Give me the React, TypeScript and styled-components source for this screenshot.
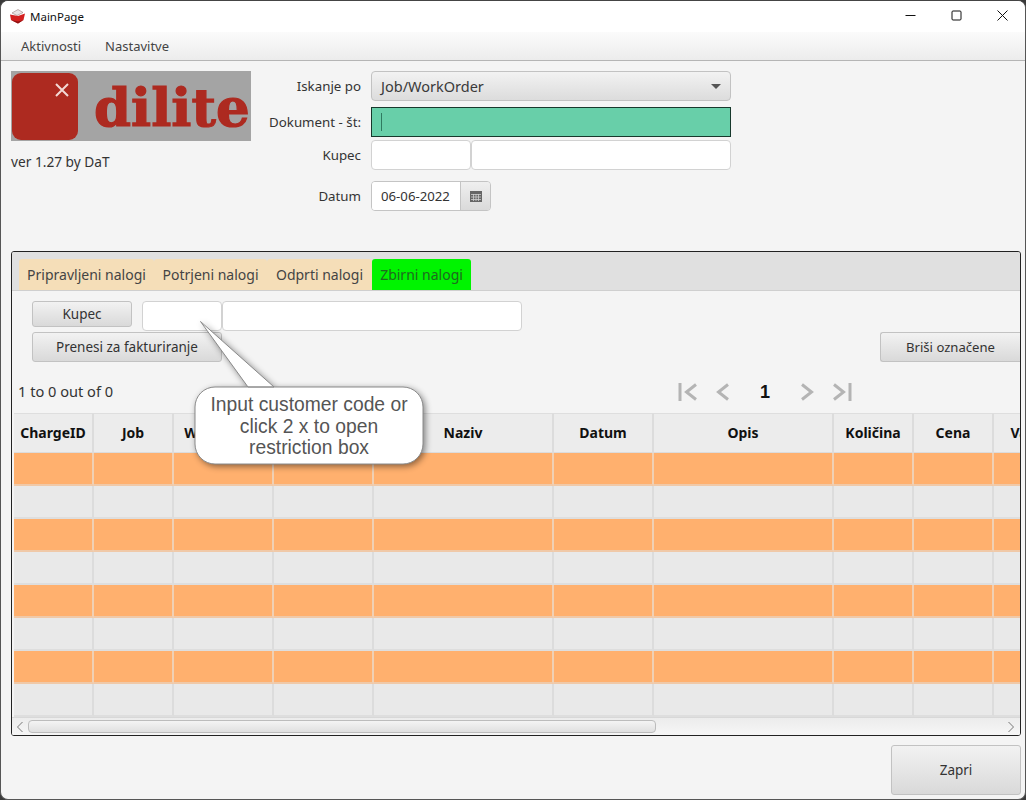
import React from "react";
import styled, { createGlobalStyle } from "styled-components";

const Global = createGlobalStyle`
  html, body { margin: 0; padding: 0; background: #3a3a3a; overflow: hidden; }
  * { box-sizing: border-box; }
`;

const Win = styled.div`
  position: relative;
  width: 1026px;
  height: 800px;
  background: #f4f4f4;
  border-radius: 8px;
  overflow: hidden;
  display: flex;
  flex-direction: column;
  font-family: "Noto Sans", "Open Sans", sans-serif;
  color: #333;
  border-top: 1px solid #444;
  border-left: 1px solid #555;
  border-right: 1px solid #555;
  border-bottom: 1px solid #555;
`;

const TitleBar = styled.div`
  height: 31px;
  background: #fff;
  display: flex;
  align-items: center;
  padding-left: 8px;
  flex: none;
`;
const AppTitle = styled.span`
  margin-left: 4px;
  font-size: 11.5px;
  color: #111;
`;
const WinButtons = styled.div`
  margin-left: auto;
  margin-top: -2px;
  display: flex;
`;
const WinButton = styled.div`
  width: 46px;
  height: 30px;
  display: flex;
  align-items: center;
  justify-content: center;
  svg { display: block; }
`;

const MenuBar = styled.div`
  height: 29px;
  background: linear-gradient(#fbfbfb, #ececec);
  border-bottom: 1px solid #b5b5b5;
  display: flex;
  align-items: center;
  padding-left: 20px;
  gap: 24px;
  flex: none;
`;
const MenuItem = styled.span`
  font-size: 13px;
  color: #444;
`;

const Top = styled.div`
  height: 190px;
  flex: none;
  display: flex;
  padding: 10px 0 0 10px;
`;
const Brand = styled.div`
  width: 240px;
  flex: none;
`;
const Logo = styled.div`
  width: 240px;
  height: 70px;
  background: #a4a4a4;
  display: flex;
  align-items: center;
  padding-left: 1px;
`;
const LogoSquare = styled.div`
  width: 66px;
  height: 67px;
  border-radius: 9px;
  background: #ad2a20;
  flex: none;
  display: flex;
  justify-content: flex-end;
  padding: 10px 9px 0 0;
`;
const LogoText = styled.span`
  font-family: "DejaVu Serif", serif;
  font-weight: 700;
  font-size: 53px;
  color: #ad2a20;
  -webkit-text-stroke: 1.2px #ad2a20;
  margin-left: 16px;
  margin-top: 2px;
  white-space: nowrap;
  line-height: 1;
`;
const Version = styled.div`
  font-size: 13.7px;
  color: #333;
  margin-top: 12px;
  line-height: 17px;
`;

const Form = styled.div`
  margin-left: 10px;
  display: grid;
  grid-template-columns: 100px 360px;
  column-gap: 10px;
  grid-template-rows: 36px 33px 41px 30px;
  align-items: start;
  align-content: start;
`;
const Label = styled.label`
  font-size: 13.3px;
  height: 30px;
  color: #333;
  display: flex;
  align-items: center;
  justify-content: flex-end;
  white-space: nowrap;
`;
const Select = styled.div`
  border: 1px solid #c2c2c2;
  border-radius: 4px;
  background: linear-gradient(#f2f2f2, #dcdcdc);
  display: flex;
  align-items: center;
  justify-content: space-between;
  padding: 0 9px;
  font-size: 14.5px;
  color: #3a3a3a;
  height: 30px;
`;
const Arrow = styled.span`
  width: 0;
  height: 0;
  border-left: 5px solid transparent;
  border-right: 5px solid transparent;
  border-top: 5px solid #555;
`;
const DocInput = styled.div`
  background: #68cfa9;
  border: 1px solid #17382c;
  display: flex;
  align-items: center;
  padding-left: 9px;
  height: 30px;
`;
const Caret = styled.span`
  width: 1px;
  height: 18px;
  background: #2f7a60;
  display: block;
`;
const Pair = styled.div`
  display: flex;
`;
const TextBox = styled.div<{ $w: number }>`
  width: ${(p) => p.$w}px;
  height: 30px;
  background: #fff;
  border: 1px solid #d2d2d2;
  border-radius: 4px;
  flex: none;
`;
const DateField = styled.div`
  width: 120px;
  height: 30px;
  display: flex;
  border: 1px solid #c4c4c4;
  border-radius: 4px;
  overflow: hidden;
`;
const DateText = styled.div`
  width: 89px;
  background: #fff;
  font-size: 13.2px;
  display: flex;
  align-items: center;
  padding-left: 9px;
  color: #333;
  border-right: 1px solid #c4c4c4;
`;
const DateBtn = styled.div`
  flex: 1;
  background: linear-gradient(#efefef, #dadada);
  display: flex;
  align-items: center;
  justify-content: center;
`;

const TabPane = styled.div`
  margin-left: 10px;
  width: 1010px;
  height: 485px;
  flex: none;
  border: 1px solid #222;
  border-radius: 3px;
  overflow: hidden;
  display: flex;
  flex-direction: column;
`;
const TabStrip = styled.div`
  height: 39px;
  flex: none;
  background: #e0e0e0;
  border-bottom: 1px solid #cfcfcf;
  padding: 7px 0 0 7px;
  display: flex;
`;
const Tab = styled.div<{ $active?: boolean; $w: number }>`
  width: ${(p) => p.$w}px;
  height: 31px;
  background: ${(p) => (p.$active ? "#00f400" : "#f5deb8")};
  border-radius: 3px 3px 0 0;
  font-size: 14px;
  color: ${(p) => (p.$active ? "#1f6a1f" : "#444")};
  display: flex;
  align-items: center;
  justify-content: center;
  white-space: nowrap;
`;
const TabBody = styled.div`
  flex: 1;
  min-height: 0;
  display: flex;
  flex-direction: column;
  background: #f4f4f4;
`;
const Tools = styled.div`
  height: 122px;
  flex: none;
  padding: 10px 0 0 20px;
  display: flex;
  flex-direction: column;
`;
const ToolRow = styled.div`
  display: flex;
  align-items: flex-start;
`;
const Btn = styled.div<{ $w: number; $h: number }>`
  width: ${(p) => p.$w}px;
  height: ${(p) => p.$h}px;
  flex: none;
  background: linear-gradient(#f2f2f2, #d9d9d9);
  border: 1px solid #c2c2c2;
  border-radius: 3px;
  display: flex;
  align-items: center;
  justify-content: center;
  font-size: 13.5px;
  color: #333;
`;
const RowGap = styled.div`
  width: 10px;
  flex: none;
`;
const SecondRow = styled(ToolRow)`
  margin-top: 1px;
  justify-content: space-between;
`;
const DeleteBtn = styled(Btn)`
  font-size: 13.1px;
  border-right: none;
  border-radius: 3px 0 0 3px;
`;
const Pager = styled.div`
  margin: 19px 0 0 -14px;
  display: flex;
  align-items: center;
  height: 22px;
`;
const Count = styled.span`
  font-size: 14.6px;
  color: #333;
  width: 660px;
  flex: none;
  padding-bottom: 2px;
`;
const PagerIcon = styled.div<{ $w: number }>`
  width: ${(p) => p.$w}px;
  flex: none;
  display: flex;
  justify-content: center;
  svg { display: block; }
`;
const PageNum = styled.span`
  width: 48px;
  text-align: center;
  font-weight: 700;
  font-size: 18px;
  font-family: "Liberation Sans", sans-serif;
  color: #111;
`;

const Table = styled.div`
  flex: 1;
  min-height: 0;
  overflow: hidden;
  padding-left: 2px;
`;
const GridRow = styled.div<{ $h: number }>`
  display: grid;
  grid-template-columns: 80px 80px 100px 100px 180px 100px 180px 80px 80px 80px;
  width: 1060px;
  height: ${(p) => p.$h}px;
`;
const HeadCell = styled.div`
  background: #ececec;
  border-right: 2px solid #dcdcdc;
  border-top: 1px solid #dedede;
  border-bottom: 1px solid #dcdcdc;
  padding-bottom: 2px;
  font-weight: 700;
  font-size: 14px;
  color: #111;
  display: flex;
  align-items: center;
  justify-content: center;
  white-space: nowrap;
`;
const Cell = styled.div<{ $orange: boolean }>`
  background: ${(p) => (p.$orange ? "#ffb06e" : "#e9e9e9")};
  border-right: 2px solid ${(p) => (p.$orange ? "#f0d0b4" : "#dcdcdc")};
  border-bottom: 2px solid ${(p) => (p.$orange ? "#f0c9a8" : "#dedede")};
`;

const ScrollBar = styled.div`
  height: 18px;
  flex: none;
  background: linear-gradient(#ececec, #f6f6f6);
  border-top: 1px solid #d8d8d8;
  display: flex;
  align-items: center;
  padding: 0 5px 0 4px;
`;
const Thumb = styled.div`
  width: 628px;
  height: 13px;
  margin-left: 4px;
  border: 1px solid #bcbcbc;
  border-radius: 4px;
  background: linear-gradient(#f4f4f4, #e0e0e0);
`;
const ScrollEnd = styled.div`
  margin-left: auto;
  display: flex;
`;

const Footer = styled.div`
  flex: 1;
  display: flex;
  justify-content: flex-end;
  align-items: flex-start;
  padding: 9px 4px 0 0;
`;
const CloseBtn = styled(Btn)`
  font-size: 13.5px;
`;

const Callout = styled.div`
  position: absolute;
  left: 194px;
  top: 320px;
  width: 228px;
  height: 143px;
  svg {
    position: absolute;
    left: 0;
    top: 0;
    overflow: visible;
    filter: drop-shadow(2px 2px 3px rgba(0, 0, 0, 0.45));
  }
`;
const CalloutText = styled.div`
  position: absolute;
  left: 0;
  right: 0;
  top: 73px;
  text-align: center;
  font-family: "Liberation Sans", Arial, sans-serif;
  font-size: 19.3px;
  line-height: 21.5px;
  color: #555;
  white-space: nowrap;
`;

const cols = ["ChargeID", "Job", "WorkOrder", "Kupec", "Naziv", "Datum", "Opis", "Količina", "Cena", "Valuta"];
const rows = [0, 1, 2, 3, 4, 5, 6, 7];

const Chevron = ({ dir, bar }: { dir: "l" | "r"; bar?: boolean }) => (
  <svg width="22" height="20" viewBox="0 0 22 20" fill="none" stroke="#b4b4b4" strokeWidth="3">
    {dir === "l" ? (
      <>
        {bar && <path d="M2 1v18" />}
        <path d="M18 2.5L8.5 10l9.5 7.5" />
      </>
    ) : (
      <>
        <path d="M4 2.5L13.5 10 4 17.5" />
        {bar && <path d="M20 1v18" />}
      </>
    )}
  </svg>
);

export default function App() {
  return (
    <Win>
      <Global />
      <TitleBar>
        <svg width="17" height="15" viewBox="0 0 17 15">
          <path d="M3 4L9 0.5l5 3-6 3z" fill="#e9e4e4" stroke="#8a6a6a" strokeWidth="0.5" />
          <path d="M1 5.5l8 1.5 7-2.5-1.5 6.5L9 14.5 2 11z" fill="#d3201f" />
          <path d="M2 11l7 3.5 5.5-3.5L9 12.5z" fill="#8e1414" />
        </svg>
        <AppTitle>MainPage</AppTitle>
        <WinButtons>
          <WinButton>
            <svg width="11" height="11" viewBox="0 0 11 11" stroke="#111" fill="none">
              <path d="M0.5 5.5h10" />
            </svg>
          </WinButton>
          <WinButton>
            <svg width="11" height="11" viewBox="0 0 11 11" stroke="#111" fill="none">
              <rect x="1" y="1" width="9" height="9" rx="1" />
            </svg>
          </WinButton>
          <WinButton>
            <svg width="11" height="11" viewBox="0 0 11 11" stroke="#111" fill="none">
              <path d="M0.5 0.5l10 10M10.5 0.5l-10 10" />
            </svg>
          </WinButton>
        </WinButtons>
      </TitleBar>
      <MenuBar>
        <MenuItem>Aktivnosti</MenuItem>
        <MenuItem>Nastavitve</MenuItem>
      </MenuBar>

      <Top>
        <Brand>
          <Logo>
            <LogoSquare>
              <svg width="14" height="14" viewBox="0 0 14 14" stroke="#f3d9d5" strokeWidth="2" fill="none">
                <path d="M1 1l12 12M13 1L1 13" />
              </svg>
            </LogoSquare>
            <LogoText>dilite</LogoText>
          </Logo>
          <Version>ver 1.27 by DaT</Version>
        </Brand>
        <Form>
          <Label>Iskanje po</Label>
          <Select>
            Job/WorkOrder
            <Arrow />
          </Select>
          <Label>Dokument - št:</Label>
          <DocInput>
            <Caret />
          </DocInput>
          <Label>Kupec</Label>
          <Pair>
            <TextBox $w={100} />
            <TextBox $w={260} />
          </Pair>
          <Label>Datum</Label>
          <DateField>
            <DateText>06-06-2022</DateText>
            <DateBtn>
              <svg width="12" height="11" viewBox="0 0 12 11">
                <rect width="12" height="11" fill="#666" />
                <path d="M1 3.5h10M1 6h10M1 8.5h10M3.5 3v7M6 3v7M8.5 3v7" stroke="#cfcfcf" strokeWidth="0.8" />
              </svg>
            </DateBtn>
          </DateField>
        </Form>
      </Top>

      <TabPane>
        <TabStrip>
          <Tab $w={135}>Pripravljeni nalogi</Tab>
          <Tab $w={113}>Potrjeni nalogi</Tab>
          <Tab $w={105}>Odprti nalogi</Tab>
          <Tab $w={99} $active>Zbirni nalogi</Tab>
        </TabStrip>
        <TabBody>
          <Tools>
            <ToolRow>
              <Btn $w={100} $h={26}>Kupec</Btn>
              <RowGap />
              <Pair>
                <TextBox $w={80} />
                <TextBox $w={300} />
              </Pair>
            </ToolRow>
            <SecondRow>
              <Btn $w={190} $h={30}>Prenesi za fakturiranje</Btn>
              <DeleteBtn $w={140} $h={30}>Briši označene</DeleteBtn>
            </SecondRow>
            <Pager>
              <Count>1 to 0 out of 0</Count>
              <PagerIcon $w={22}><Chevron dir="l" bar /></PagerIcon>
              <PagerIcon $w={41}><Chevron dir="l" /></PagerIcon>
              <PageNum>1</PageNum>
              <PagerIcon $w={40}><Chevron dir="r" /></PagerIcon>
              <PagerIcon $w={24}><Chevron dir="r" bar /></PagerIcon>
            </Pager>
          </Tools>
          <Table>
            <GridRow $h={40}>
              {cols.map((c) => (
                <HeadCell key={c}>{c}</HeadCell>
              ))}
            </GridRow>
            {rows.map((r) => (
              <GridRow key={r} $h={33}>
                {cols.map((c) => (
                  <Cell key={c} $orange={r % 2 === 0} />
                ))}
              </GridRow>
            ))}
          </Table>
          <ScrollBar>
            <svg width="8" height="12" viewBox="0 0 8 12" fill="none" stroke="#777" strokeWidth="1">
              <path d="M6.5 1L1.5 6l5 5" />
            </svg>
            <Thumb />
            <ScrollEnd>
              <svg width="8" height="12" viewBox="0 0 8 12" fill="none" stroke="#777" strokeWidth="1">
                <path d="M1.5 1l5 5-5 5" />
              </svg>
            </ScrollEnd>
          </ScrollBar>
        </TabBody>
      </TabPane>

      <Footer>
        <CloseBtn $w={130} $h={50}>Zapri</CloseBtn>
      </Footer>

      <Callout>
        <svg width="228" height="143" viewBox="0 0 228 143">
          <path
            d="M5.5 0.5L53 66H208a20 20 0 0 1 20 20V123a20 20 0 0 1-20 20H20a20 20 0 0 1-20-20V86a20 20 0 0 1 20-20H79Z"
            fill="#fff"
            stroke="#8a8a8a"
            strokeWidth="1"
          />
        </svg>
        <CalloutText>
          Input customer code or
          <br />
          click 2 x to open
          <br />
          restriction box
        </CalloutText>
      </Callout>
    </Win>
  );
}
